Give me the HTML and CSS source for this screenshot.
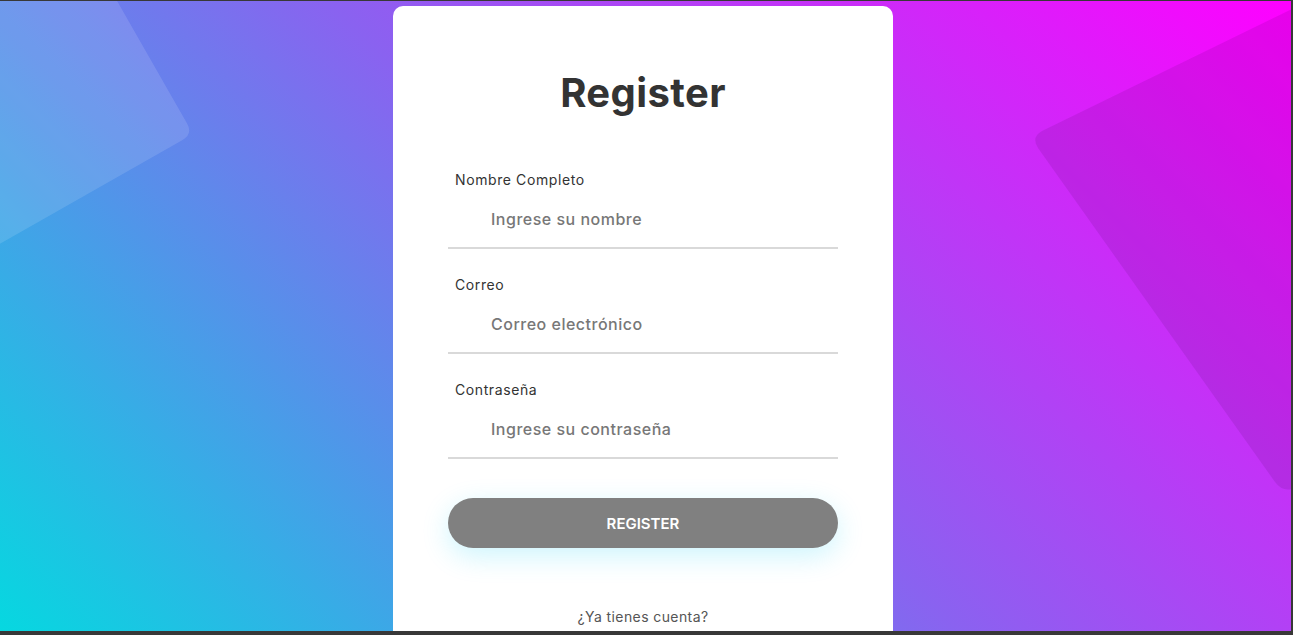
FILE: index.html
```html
<!DOCTYPE html>
<html lang="es">
<head>
<meta charset="utf-8">
<title>Register</title>
<link rel="stylesheet" href="styles.css">
</head>
<body>
<div class="screen">
  <svg class="decor" width="1291" height="630" viewBox="0 0 1291 630" aria-hidden="true">
    <path class="shape-light" d="M44 -128 L187.1 122.6 Q193 133 182.6 138.9 L-155 331 L-304 70 Z"/>
    <path class="shape-dark" d="M1300 4 L1042 130 Q1031 136 1038 147 L1275 481 Q1283 492 1295 487 L1400 440 L1400 0 Z"/>
  </svg>
  <main class="card">
    <h1 class="title">Register</h1>
    <form class="form">
      <div class="field">
        <label class="label" for="nombre">Nombre Completo</label>
        <input class="input" id="nombre" type="text" placeholder="Ingrese su nombre">
      </div>
      <div class="field">
        <label class="label" for="correo">Correo</label>
        <input class="input" id="correo" type="email" placeholder="Correo electrónico">
      </div>
      <div class="field">
        <label class="label" for="pass">Contraseña</label>
        <input class="input" id="pass" type="password" placeholder="Ingrese su contraseña">
      </div>
      <button class="btn" type="button">REGISTER</button>
      <p class="link">¿Ya tienes cuenta?</p>
    </form>
  </main>
</div>
</body>
</html>
```

FILE: styles.css
```css
html, body {
  margin: 0;
  padding: 0;
}
body {
  background: #383838;
  width: 1293px;
  height: 635px;
  overflow: hidden;
  font-family: "Inter", "Open Sans", sans-serif;
}
.screen {
  position: relative;
  width: 1291px;
  height: 630px;
  margin-top: 1px;
  overflow: hidden;
  background: linear-gradient(45deg, #06d8e0 0%, #8a62f0 50%, #ff00ff 100%);
  display: flex;
  justify-content: center;
}
.decor {
  position: absolute;
  left: 0;
  top: 0;
}
.shape-light {
  fill: rgba(255, 255, 255, 0.12);
}
.shape-dark {
  fill: rgba(40, 0, 60, 0.1);
}
.card {
  position: relative;
  margin-top: 5px;
  margin-right: 5px;
  width: 500px;
  height: 700px;
  box-sizing: border-box;
  background: #fff;
  border-radius: 10px;
  padding: 62px 55px 40px;
}
.title {
  margin: 0;
  height: 50px;
  line-height: 50px;
  text-align: center;
  font-size: 40px;
  font-weight: 700;
  color: #333;
  letter-spacing: 0.4px;
}
.form {
  margin-top: 52px;
  display: flex;
  flex-direction: column;
}
.field {
  display: flex;
  flex-direction: column;
  margin-bottom: 26px;
}
.label {
  display: block;
  height: 20px;
  line-height: 20px;
  padding-left: 7px;
  font-size: 14px;
  letter-spacing: 0.6px;
  color: #333;
}
.input {
  height: 59px;
  box-sizing: border-box;
  border: none;
  border-bottom: 2px solid #d9d9d9;
  padding: 0 0 0 43px;
  font-family: inherit;
  font-size: 16px;
  font-weight: 500;
  letter-spacing: 0.5px;
  color: #555;
  outline: none;
  background: transparent;
}
.input::placeholder {
  color: #777;
}
.btn {
  margin-top: 13px;
  height: 50px;
  border: none;
  border-radius: 25px;
  background: #808080;
  color: #fff;
  font-family: inherit;
  font-size: 15px;
  font-weight: 600;
  box-shadow: 0 8px 28px rgba(0, 205, 245, 0.2);
}
.link {
  margin: 59px 0 0;
  height: 20px;
  line-height: 20px;
  text-align: center;
  font-size: 14px;
  letter-spacing: 0.4px;
  color: #555;
}
```
